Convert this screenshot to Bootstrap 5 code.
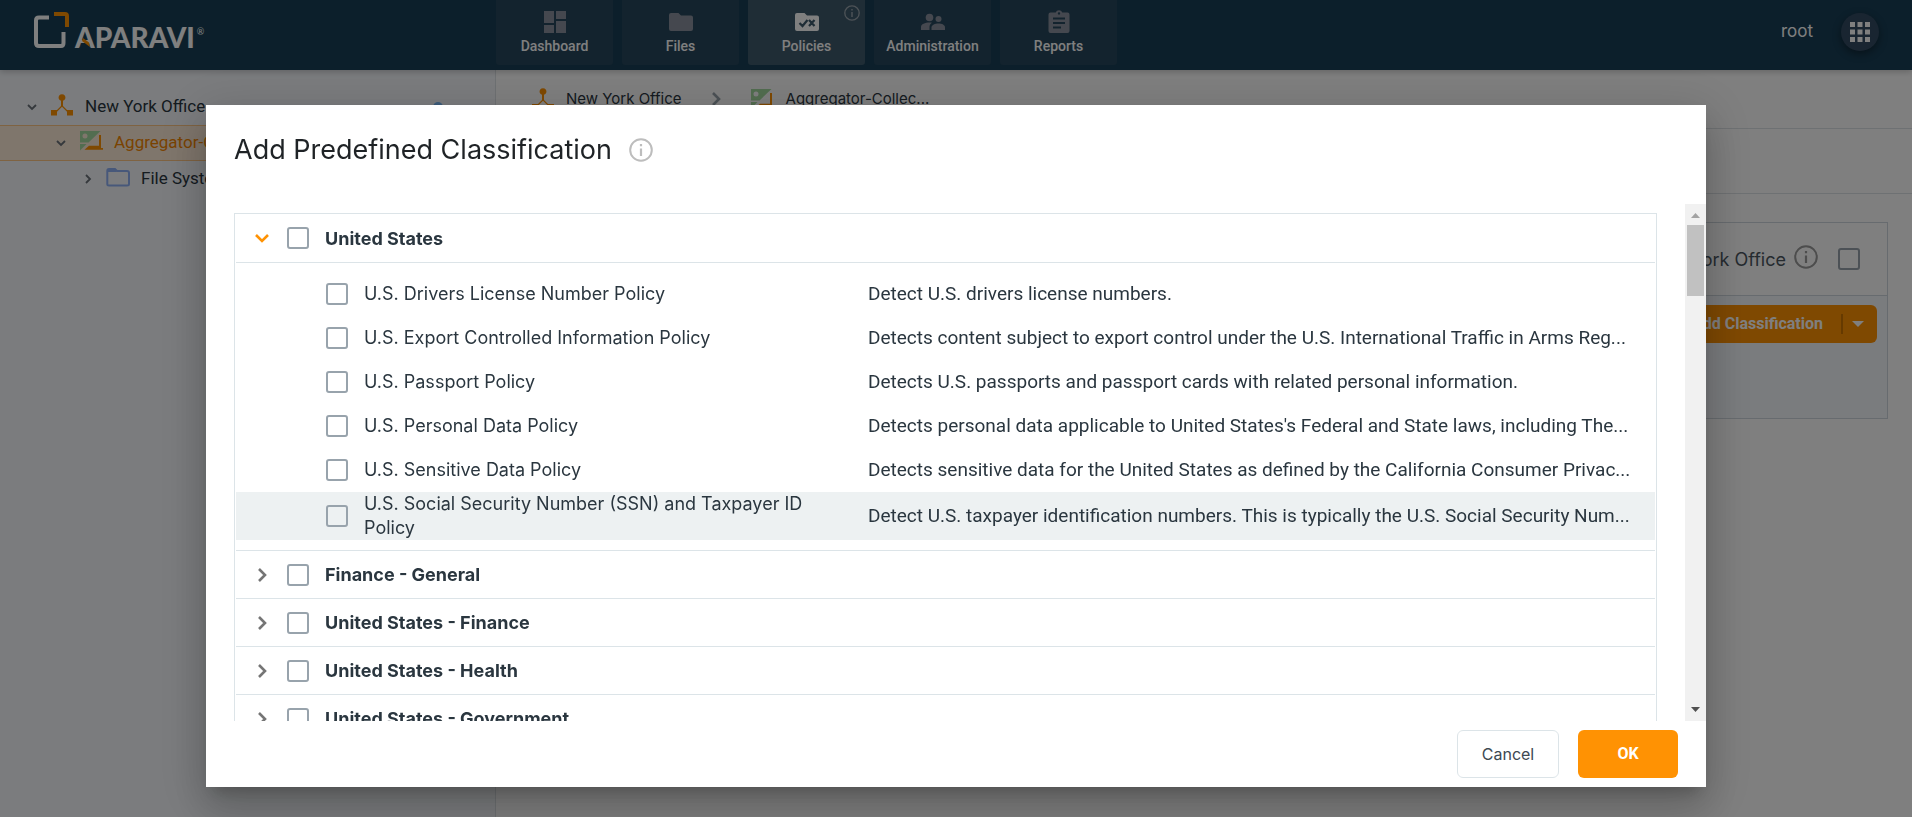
<!DOCTYPE html>
<html lang="en">
<head>
<meta charset="utf-8">
<meta name="viewport" content="width=device-width, initial-scale=1">
<title>Aparavi - Policies</title>
<link rel="stylesheet" href="https://cdn.jsdelivr.net/npm/bootstrap@5.3.0/dist/css/bootstrap.min.css">
<style>
  :root { --round: Inter, "Liberation Sans", sans-serif; --orange: #ff9203; --line: #dce4e8; --ink: #2a363f; }
  body { font-family: Roboto, "Liberation Sans", sans-serif; color: var(--ink); overflow: hidden; }
  svg { display: block; flex: none; }
  .round-type { font-family: var(--round); }
  .app-header { height: 70px; background: #183e56; box-shadow: 0 2px 6px rgba(0,0,0,.2); z-index: 1; }
  .brand-col { width: 496px; padding: 10px 0 0 33px; }
  .brand-link { color: #fff; text-decoration: none; }
  .brand-word { font: 900 28px/28px Lato, sans-serif; margin: 13px 0 0 4px; position: relative; }
  .brand-slash { position: absolute; left: 7px; top: 15px; }
  .brand-reg { font: 9px/9px Lato, sans-serif; margin: 17px 0 0 2px; }
  .tab-gap { gap: 9px; }
  .tab-tile { width: 117px; height: 65px; padding-top: 10px; gap: 2px; background: #26465c; color: #fff; font-size: 14px; line-height: 20px; font-weight: 500; text-decoration: none; border-radius: 0 0 3px 3px; position: relative; }
  .tab-tile svg { color: #8a919e; }
  .tab-tile.current { background: #3e5a6c; }
  .tab-tile.current svg { color: #fff; }
  .tab-info { position: absolute; top: 5px; right: 5px; }
  .tab-tile.current .tab-info svg { color: #9aa5ae; }
  .user-area { padding: 0 33px 6px 0; gap: 28px; }
  .apps-btn { width: 38px; height: 38px; background: #334b63; border: 0; color: #fff; box-shadow: 0 3px 8px rgba(0,0,0,.4); }
  .user-name { font-family: var(--round); font-size: 17px; color: #fff; }
  .side-tree { width: 496px; flex: none; background: #f6f9fd; border-right: 1px solid #dde2e6; padding-top: 19px; }
  .tree-row { height: 36px; font-size: 17px; gap: 11px; color: var(--ink); }
  .tree-row a { color: inherit; text-decoration: none; }
  .tree-row.picked { background: #feecd8; box-shadow: inset 0 1px #ffc685, inset 0 -1px #ffc685; color: #f58600; }
  .lvl-1 { padding-left: 25px; } .lvl-2 { padding-left: 54px; } .lvl-3 { padding-left: 81px; }
  .bare-btn { border: 0; background: none; padding: 0; color: #6a7178; }
  .state-dot { width: 10px; height: 10px; background: #7ab8f5; margin-right: 52px; }
  .crumbs { height: 59px; padding-left: 36px; border-bottom: 1px solid #dde2e6; font-size: 15px; font-family: var(--round); }
  .crumbs a { color: var(--ink); text-decoration: none; gap: 12px; }
  .crumb-sep { margin: 0 28px; color: #98a3ac; }
  .tool-strip { height: 65px; border-bottom: 1px solid #dde2e6; }
  .policy-panel { margin: 28px 24px 0 28px; border: 1px solid #cfd7de; }
  .panel-top { height: 73px; padding-right: 27px; border-bottom: 1px solid #cfd7de; font-size: 18px; font-family: var(--round); color: #4b565f; }
  .panel-info { color: #9a9a9a; }
  .panel-body { height: 122px; background: #f5f8fd; padding: 9px 10px; }
  .add-btn, .add-btn:hover { height: 38px; background: var(--orange); color: #fff; font-weight: 700; font-size: 16px; border: 0; border-radius: 6px; padding: 0 13px 0 20px; }
  .split { width: 2px; height: 20px; background: #cc7400; margin: 0 9px 0 18px; }
  .tick { appearance: none; width: 22px; height: 22px; flex: none; margin: 0; border: 2px solid #98a3ac; border-radius: 3px; background: transparent; }
  .tick:checked { background: var(--orange); }
  .shade { position: fixed; inset: 0; z-index: 5; background: rgba(0,0,0,.5); padding: 105px 16px 30px; }
  .dialog-box { max-width: 1500px; background: #fff; box-shadow: 0 11px 15px -7px rgba(0,0,0,.2), 0 24px 38px 3px rgba(0,0,0,.14), 0 9px 46px 8px rgba(0,0,0,.12); }
  .dialog-title { font-size: 27px; line-height: 36px; font-weight: 400; color: #1f2326; margin: 0; }
  .dialog-head { padding: 27px 28px 36px; gap: 17px; }
  .info-tone { color: #bdbdbd; }
  .dialog-main { min-height: 0; }
  .list-view { min-height: 0; min-width: 0; overflow-y: auto; scrollbar-width: none; padding: 9px 28px 0; }
  .list-view::-webkit-scrollbar { display: none; }
  .class-list { border: 1px solid var(--line); padding: 0 1px; }
  .group-row { height: 48px; border-bottom: 1px solid var(--line); padding-left: 18px; font-size: 18px; font-weight: 700; font-family: var(--round); }
  .group-row.open { height: 49px; }
  .twisty { width: 16px; margin-right: 17px; color: #757575; }
  .open .twisty { color: var(--orange); }
  .group-row label { margin-left: 16px; }
  .children { padding: 9px 0 10px; border-bottom: 1px solid var(--line); }
  .policy-row { min-height: 44px; padding: 0 20px 0 90px; font-size: 19px; line-height: 24px; }
  .policy-row.hovered { background: #edf1f2; }
  .policy-row label { margin-left: 16px; width: 504px; padding-right: 20px; flex: none; font-size: 18px; font-family: var(--round); }
  .scroll-rail { width: 21px; background: #f1f1f1; flex: none; padding: 9px 2px; }
  .scroll-thumb { height: 71px; width: 17px; background: #c1c1c1; margin-top: 7px; }
  .dialog-foot { height: 66px; padding: 0 28px; gap: 19px; flex: none; }
  .foot-btn { height: 48px; border-radius: 6px; font-size: 16px; padding: 0; }
  .cancel-btn, .cancel-btn:hover { width: 102px; border: 1px solid var(--line); color: #3d4852; background: #fff; font-family: var(--round); }
  .ok-btn, .ok-btn:hover { width: 100px; background: var(--orange); color: #fff; font-weight: 700; border: 0; }
</style>
</head>
<body class="vh-100">
<svg width="0" height="0" class="position-absolute" aria-hidden="true">
  <symbol id="i-info" viewBox="0 0 24 24"><circle cx="12" cy="12" r="10.800" fill="none" stroke="currentColor" stroke-width="2"/><path fill="currentColor" d="M10.900 6h2.200v2.300h-2.200zM10.900 10.500h2.200V18h-2.200z"/></symbol>
  <symbol id="i-down" viewBox="0 0 16 16"><path d="M2 5l6 6 6-6" fill="none" stroke="currentColor" stroke-width="2.600"/></symbol>
  <symbol id="i-right" viewBox="0 0 16 16"><path d="M5 2l6 6-6 6" fill="none" stroke="currentColor" stroke-width="2.600"/></symbol>
  <symbol id="i-down-sm" viewBox="0 0 14 14"><path d="M3 5l4 4 4-4" fill="none" stroke="currentColor" stroke-width="1.800"/></symbol>
  <symbol id="i-right-sm" viewBox="0 0 14 14"><path d="M5 3l4 4-4 4" fill="none" stroke="currentColor" stroke-width="1.800"/></symbol>
  <symbol id="i-node" viewBox="0 0 22 22"><path fill="#ff9203" d="M16 16l-4-4V6.800a3.400 3.400 0 1 0-2 0V12l-4 4H0v5.500h6V17.800l5-5 5 5v3.700h6V16z"/></symbol>
  <symbol id="i-agg" viewBox="0 0 24 22"><path fill="#a5dba0" fill-rule="evenodd" d="M1 1h20.500L9.500 12.500H1zM6 3.500a2.500 2.500 0 1 0 0 5 2.500 2.500 0 0 0 0-5z"/><path fill="#a5dba0" d="M1 14h6.500L1 20.500z"/><path fill="#ff9203" d="M20 5h2v13h2v1.800H5.500l4.500-4H20z"/></symbol>
</svg>

<div class="d-flex flex-column h-100">
  <header class="app-header d-flex flex-shrink-0">
    <div class="brand-col">
      <a href="#" class="brand-link d-flex align-items-start" aria-label="Aparavi">
        <svg width="38" height="40" viewBox="0 0 38 40">
          <path d="M16 7.500H6Q3 7.500 3 10.500V33q0 3 3 3h22q2.500 0 2.500-3V22" fill="none" stroke="#fff" stroke-width="4"/>
          <path d="M21 4h11q2 0 2 2v11" fill="none" stroke="#ff9203" stroke-width="4"/>
        </svg>
        <span class="brand-word">APARAVI<svg class="brand-slash" width="8" height="9" viewBox="0 0 8 9"><path d="M1 0l6 4.500 1 4.500L0 3z" fill="#ff9203"/></svg></span>
        <span class="brand-reg">®</span>
      </a>
    </div>
    <nav class="d-flex tab-gap" aria-label="Main">
      <a href="#" class="tab-tile d-flex flex-column align-items-center"><svg width="28" height="24" viewBox="0 0 28 24"><path fill="currentColor" d="M3 13h10V1H3zm0 10h10v-8H3zm12 0h10V11H15zm0-22v8h10V1z"/></svg>Dashboard</a>
      <a href="#" class="tab-tile d-flex flex-column align-items-center"><svg width="28" height="24" viewBox="0 0 28 24"><path fill="currentColor" d="M4 3h7.500L14 5.500h10q2 0 2 2V19q0 2-2 2H4q-2 0-2-2V5q0-2 2-2z"/></svg>Files</a>
      <a href="#" class="tab-tile current d-flex flex-column align-items-center"><svg width="28" height="24" viewBox="0 0 28 24"><path fill="currentColor" d="M4 3h7.500L14 5.500h10q2 0 2 2V19q0 2-2 2H4q-2 0-2-2V5q0-2 2-2z"/><path d="M6.500 13l3 3 5-6M16 10l5.500 6M21.500 10L16 16" fill="none" stroke="#3e5a6c" stroke-width="2.200"/></svg>Policies<span class="tab-info"><svg width="16" height="16"><use href="#i-info"/></svg></span></a>
      <a href="#" class="tab-tile d-flex flex-column align-items-center"><svg width="28" height="24" viewBox="0 0 28 24"><g fill="currentColor"><circle cx="10.500" cy="7.500" r="3.800"/><circle cx="19.500" cy="9" r="3"/><path d="M2 20v-3c0-3 4-4.500 8.500-4.500.8 0 1.700 0 2.500.2-1.500 1-2.500 2.500-2.500 4.300v3z"/><path d="M12.500 20v-2.500c0-2.500 3.500-4 7-4s6.500 1.500 6.500 4V20z"/></g></svg>Administration</a>
      <a href="#" class="tab-tile d-flex flex-column align-items-center"><svg width="28" height="24" viewBox="0 0 28 24"><path fill="currentColor" fill-rule="evenodd" d="M5.500 2.500h5.200a3.500 3.500 0 0 1 6.600 0h5.200q2 0 2 2V21q0 2-2 2h-17q-2 0-2-2V4.500q0-2 2-2zM14 2.200a1.200 1.200 0 1 0 0 2.400 1.200 1.200 0 0 0 0-2.400zM8 7.500v2h12v-2zM8 12v2h12v-2zM8 16.500v2h8v-2z"/></svg>Reports</a>
    </nav>
    <div class="user-area ms-auto d-flex align-items-center">
      <span class="user-name">root</span>
      <button type="button" class="apps-btn rounded-circle d-flex align-items-center justify-content-center p-0" aria-label="Apps"><svg width="20" height="20" viewBox="0 0 20 20"><path fill="currentColor" d="M0 0h5v5H0zm7.500 0h5v5h-5zM15 0h5v5h-5zM0 7.500h5v5H0zm7.500 0h5v5h-5zm7.500 0h5v5h-5zM0 15h5v5H0zm7.500 0h5v5h-5zm7.500 0h5v5h-5z"/></svg></button>
    </div>
  </header>

  <div class="d-flex flex-fill">
    <aside class="side-tree">
      <div class="tree-row lvl-1 d-flex align-items-center">
        <button type="button" class="bare-btn" aria-label="Collapse"><svg width="14" height="14"><use href="#i-down-sm"/></svg></button>
        <svg class="mb-1" width="24" height="22"><use href="#i-node"/></svg>
        <a href="#">New York Office</a>
        <span class="state-dot rounded-circle ms-auto"></span>
      </div>
      <div class="tree-row picked lvl-2 d-flex align-items-center">
        <button type="button" class="bare-btn" aria-label="Collapse"><svg width="14" height="14"><use href="#i-down-sm"/></svg></button>
        <svg class="mb-1" width="24" height="22"><use href="#i-agg"/></svg>
        <a href="#">Aggregator-Collector</a>
      </div>
      <div class="tree-row lvl-3 d-flex align-items-center">
        <button type="button" class="bare-btn" aria-label="Expand"><svg width="14" height="14"><use href="#i-right-sm"/></svg></button>
        <svg class="mb-1" width="24" height="20" viewBox="0 0 24 20"><path d="M3 2h6l2 2h10q2 0 2 2V17q0 1.500-2 1.500H3Q1.300 18.500 1.300 17V4Q1.300 2 3 2z" fill="none" stroke="#8fb0f5" stroke-width="2"/><path fill="#8fb0f5" d="M2 2h7l2 3H2z"/></svg>
        <a href="#">File System</a>
      </div>
    </aside>

    <main class="flex-fill bg-white">
      <nav class="crumbs d-flex align-items-center" aria-label="Breadcrumb">
        <a href="#" class="d-flex align-items-center"><svg width="22" height="22"><use href="#i-node"/></svg>New York Office</a>
        <svg class="crumb-sep" width="12" height="16" viewBox="2 0 12 16"><use href="#i-right" width="16" height="16"/></svg>
        <a href="#" class="d-flex align-items-center"><svg width="24" height="22"><use href="#i-agg"/></svg>Aggregator-Collec...</a>
      </nav>
      <div class="tool-strip"></div>
      <section class="policy-panel">
        <div class="panel-top d-flex align-items-center justify-content-end">
          <label for="inherit">New York Office</label>
          <svg class="panel-info ms-2 me-3 mb-1" width="24" height="24"><use href="#i-info"/></svg>
          <input type="checkbox" class="tick ms-1" id="inherit">
        </div>
        <div class="panel-body d-flex justify-content-end align-items-start">
          <button type="button" class="add-btn btn d-flex align-items-center">Add Classification<span class="split"></span><svg width="12" height="6" viewBox="0 0 12 6"><path d="M0 0h12L6 6z" fill="#fff"/></svg></button>
        </div>
      </section>
    </main>
  </div>
</div>

<div class="shade d-flex justify-content-center">
  <div class="dialog-box d-flex flex-column w-100" role="dialog" aria-modal="true" aria-labelledby="dlg-title">
    <div class="dialog-head d-flex align-items-center">
      <h1 class="dialog-title round-type" id="dlg-title">Add Predefined Classification</h1>
      <svg class="info-tone" width="24" height="24"><use href="#i-info"/></svg>
    </div>

    <div class="dialog-main d-flex flex-fill">
      <div class="list-view flex-fill">
        <div class="class-list">
          <div class="group-row open d-flex align-items-center">
            <button type="button" class="bare-btn twisty" aria-label="Collapse"><svg width="16" height="16"><use href="#i-down"/></svg></button>
            <input type="checkbox" class="tick" id="g1"><label for="g1">United States</label>
          </div>
          <div class="children">
            <div class="policy-row d-flex align-items-center"><input type="checkbox" class="tick" id="p1"><label for="p1">U.S. Drivers License Number Policy</label><span class="text-truncate">Detect U.S. drivers license numbers.</span></div>
            <div class="policy-row d-flex align-items-center"><input type="checkbox" class="tick" id="p2"><label for="p2">U.S. Export Controlled Information Policy</label><span class="text-truncate">Detects content subject to export control under the U.S. International Traffic in Arms Reg...</span></div>
            <div class="policy-row d-flex align-items-center"><input type="checkbox" class="tick" id="p3"><label for="p3">U.S. Passport Policy</label><span class="text-truncate">Detects U.S. passports and passport cards with related personal information.</span></div>
            <div class="policy-row d-flex align-items-center"><input type="checkbox" class="tick" id="p4"><label for="p4">U.S. Personal Data Policy</label><span class="text-truncate">Detects personal data applicable to United States's Federal and State laws, including The...</span></div>
            <div class="policy-row d-flex align-items-center"><input type="checkbox" class="tick" id="p5"><label for="p5">U.S. Sensitive Data Policy</label><span class="text-truncate">Detects sensitive data for the United States as defined by the California Consumer Privac...</span></div>
            <div class="policy-row hovered d-flex align-items-center"><input type="checkbox" class="tick" id="p6"><label for="p6">U.S. Social Security Number (SSN) and Taxpayer ID Policy</label><span class="text-truncate">Detect U.S. taxpayer identification numbers. This is typically the U.S. Social Security Num...</span></div>
          </div>
          <div class="group-row d-flex align-items-center">
            <button type="button" class="bare-btn twisty" aria-label="Expand"><svg width="16" height="16"><use href="#i-right"/></svg></button>
            <input type="checkbox" class="tick" id="g2"><label for="g2">Finance - General</label>
          </div>
          <div class="group-row d-flex align-items-center">
            <button type="button" class="bare-btn twisty" aria-label="Expand"><svg width="16" height="16"><use href="#i-right"/></svg></button>
            <input type="checkbox" class="tick" id="g3"><label for="g3">United States - Finance</label>
          </div>
          <div class="group-row d-flex align-items-center">
            <button type="button" class="bare-btn twisty" aria-label="Expand"><svg width="16" height="16"><use href="#i-right"/></svg></button>
            <input type="checkbox" class="tick" id="g4"><label for="g4">United States - Health</label>
          </div>
          <div class="group-row d-flex align-items-center">
            <button type="button" class="bare-btn twisty" aria-label="Expand"><svg width="16" height="16"><use href="#i-right"/></svg></button>
            <input type="checkbox" class="tick" id="g5"><label for="g5">United States - Government</label>
          </div>
        </div>
      </div>
      <div class="scroll-rail d-flex flex-column align-items-center" aria-hidden="true">
        <svg width="9" height="5" viewBox="0 0 9 5"><path d="M0 5h9L4.500 0z" fill="#a3a3a3"/></svg>
        <div class="scroll-thumb"></div>
        <svg class="mt-auto" width="9" height="5" viewBox="0 0 9 5"><path d="M0 0h9L4.500 5z" fill="#505050"/></svg>
      </div>
    </div>

    <div class="dialog-foot d-flex align-items-center justify-content-end">
      <button type="button" class="foot-btn cancel-btn btn">Cancel</button>
      <button type="button" class="foot-btn ok-btn btn">OK</button>
    </div>
  </div>
</div>
<script src="https://cdn.jsdelivr.net/npm/bootstrap@5.3.0/dist/js/bootstrap.bundle.min.js"></script>
</body>
</html>
